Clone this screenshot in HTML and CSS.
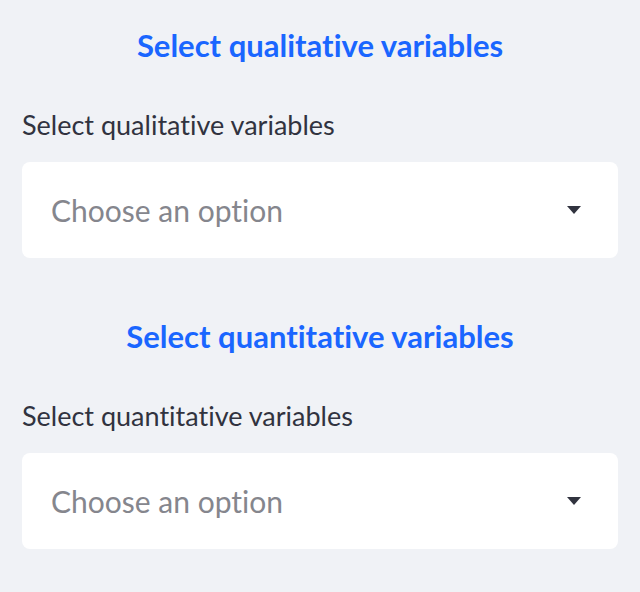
FILE: index.html
```html
<!DOCTYPE html>
<html>
<head>
<meta charset="utf-8">
<link rel="stylesheet" href="styles.css">
</head>
<body>
<div class="sidebar">
  <section class="group">
    <h2 class="title">Select qualitative variables</h2>
    <label class="label">Select qualitative variables</label>
    <div class="select">
      <span class="placeholder">Choose an option</span>
      <svg class="caret" width="14" height="8" viewBox="0 0 14 8"><path d="M0 0H14L7 8Z" fill="#31333f"/></svg>
    </div>
  </section>
  <section class="group">
    <h2 class="title">Select quantitative variables</h2>
    <label class="label">Select quantitative variables</label>
    <div class="select">
      <span class="placeholder">Choose an option</span>
      <svg class="caret" width="14" height="8" viewBox="0 0 14 8"><path d="M0 0H14L7 8Z" fill="#31333f"/></svg>
    </div>
  </section>
</div>
</body>
</html>
```

FILE: styles.css
```css
html, body {
  margin: 0;
  padding: 0;
  background: #f0f2f6;
}
body {
  font-family: "Lato", "Liberation Sans", sans-serif;
  font-variant-ligatures: none;
  color: #31333f;
}
.sidebar {
  padding: 16px 22px 0 22px;
  display: flex;
  flex-direction: column;
  gap: 49px;
}
.group {
  display: flex;
  flex-direction: column;
}
.title {
  margin: 0;
  height: 58px;
  line-height: 58px;
  text-align: center;
  font-size: 31px;
  font-weight: 700;
  color: #1a66ff;
}
.label {
  display: block;
  margin-top: 33px;
  height: 36px;
  line-height: 36px;
  font-size: 27px;
}
.select {
  margin-top: 19px;
  height: 96px;
  background: #ffffff;
  border-radius: 8px;
  display: flex;
  align-items: center;
  justify-content: space-between;
  padding: 0 37px 0 29px;
}
.placeholder {
  font-size: 30px;
  color: #85868d;
}
.caret {
  display: block;
}
```
